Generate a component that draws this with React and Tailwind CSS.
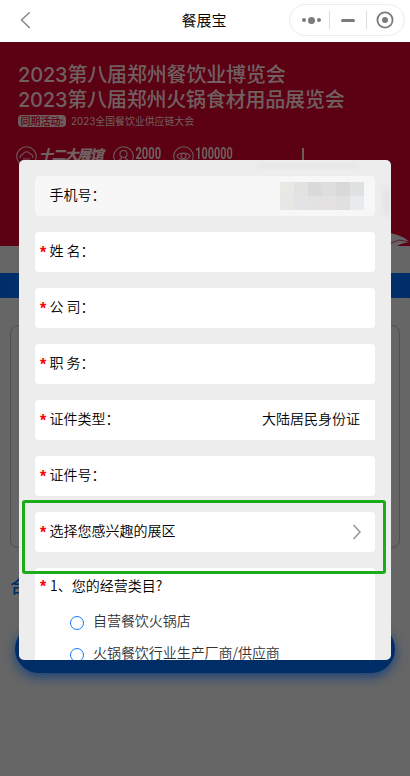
import React from "react";

const UI = "font-['Noto_Sans_CJK_SC',sans-serif]";

function Header() {
  return (
    <header className="relative flex h-[42px] shrink-0 items-center justify-between bg-white pl-5 pr-[5px]">
      <svg className="-mt-[2px]" width="11" height="18" viewBox="0 0 11 18" fill="none" stroke="#858585" strokeWidth="1.4">
        <path d="M9.8 1.2 1.5 9l8.3 8" />
      </svg>
      <h1 className="absolute left-0 right-[2px] top-[9px] text-center text-[15px] font-[350] leading-[22px] text-black">餐展宝</h1>
      <div className="relative mt-[-2px] flex h-8 w-[116px] items-center rounded-full border border-[#ececec]">
        <div className="flex flex-1 items-center justify-center gap-[2px] pl-[4px]">
          <i className="size-1 rounded-full bg-[#7b7b7b]" />
          <i className="size-[7px] rounded-full bg-[#7b7b7b]" />
          <i className="size-1 rounded-full bg-[#7b7b7b]" />
        </div>
        <div className="flex h-[18px] w-[38px] items-center justify-center border-x border-[#dedede]">
          <i className="h-[3px] w-[14px] rounded-full bg-[#7b7b7b]" />
        </div>
        <div className="flex w-[37px] items-center pl-[9px]">
          <svg width="18" height="18" viewBox="0 0 18 18">
            <circle cx="9" cy="9" r="7.6" fill="none" stroke="#7b7b7b" strokeWidth="1.8" />
            <circle cx="9" cy="9" r="3" fill="#7b7b7b" />
          </svg>
        </div>
      </div>
    </header>
  );
}

function Ring({ children }) {
  return (
    <svg className="shrink-0" width="21" height="21" viewBox="0 0 21 21" fill="none" stroke="#6c5b5b" strokeWidth="1.1">
      <circle cx="10.5" cy="10.5" r="9.8" />
      {children}
    </svg>
  );
}

function Banner() {
  return (
    <section className="relative h-[204px] shrink-0 overflow-hidden bg-[#5c0014] pl-[18px] pt-[21px] font-['Inter','Noto_Sans_CJK_SC',sans-serif] text-[#706060]">
      <p className="whitespace-nowrap text-[20px] font-medium leading-[25px] tracking-[-0.17px]">2023第八届郑州餐饮业博览会</p>
      <p className="whitespace-nowrap text-[20px] font-medium leading-[25px] tracking-[-0.2px]">2023第八届郑州火锅食材用品展览会</p>
      <div className="mt-[1px] flex h-[13px] items-center gap-[5px]">
        <span className="flex h-3 w-[48px] items-center justify-center whitespace-nowrap rounded-[4px] bg-[#6e5c5c] text-[10px] font-medium leading-3 text-[#5c0014]">同期活动:</span>
        <span className="whitespace-nowrap text-[9.9px] leading-3">2023全国餐饮业供应链大会</span>
      </div>
      <div className="-ml-[2px] mt-[19px] flex h-[23px] items-start">
        <Ring><path d="M4 12c0-3 2-3 3-4 2-3 5-3 7 0 2 0 3 2 3 4M7 13h7" /></Ring>
        <span className="ml-[2px] w-[74px] whitespace-nowrap text-[14px] font-black italic leading-[18px] tracking-[-1.3px]">十二大展馆</span>
        <Ring><circle cx="10.5" cy="8" r="3.5" /><path d="M8.5 10.5v2L5 15M12.500 10.500v2l3.500 2.500" /></Ring>
        <span className="w-[39px]"><b className="block origin-left scale-x-[.7] pl-[2px] font-['Roboto',sans-serif] text-[16px] leading-[15px]">2000</b></span>
        <Ring><path d="M4 10c2-4 11-4 13 0-2 5-11 5-13 0Z" /><circle cx="10.500" cy="10" r="2.500" /></Ring>
        <span className="w-[49px]"><b className="block origin-left scale-x-[.68] pl-[2px] font-['Roboto',sans-serif] text-[16px] leading-[15px]">100000</b></span>
        <i className="ml-[59px] mt-[2px] h-5 w-[2px] bg-[#6e5c5c]" />
      </div>
      <svg className="absolute bottom-0 right-0" width="25" height="14" viewBox="0 0 25 14">
        <path d="M0 0c12 2 20 5 24 10l-8 2-4 2H0Z" fill="#656363" />
        <path d="M6 11l8-3 10 2" stroke="#5c2027" fill="none" />
      </svg>
    </section>
  );
}

function Star() {
  return <span className="w-[10px] shrink-0 pt-[2px] font-['Liberation_Sans',sans-serif] text-[16px] font-bold leading-5 text-[#f00]">*</span>;
}

function Field({ label, required = true, muted = false, square = false, children }) {
  return (
    <div className={`flex h-10 shrink-0 items-center pl-[5px] pr-[15px] ${square ? "rounded-l-[4px]" : "rounded-[4px]"} ${muted ? "bg-[#f7f7f7]" : "bg-white"}`}>
      {required ? <Star /> : <span className="w-[10px]" />}
      <span className="-ml-[0.5px] whitespace-pre pb-[4px]">{label}</span>
      <div className="ml-auto flex items-center">{children}</div>
    </div>
  );
}

const mosaic = [
  "bg-[#e8e8e5]", "bg-[#e2e2e1]", "bg-[#dadada]", "bg-[#dedede]", "bg-[#d9d9d9]", "bg-[#e0e2e1]",
  "bg-[#e7e7e6]", "bg-[#e3e3e5]", "bg-[#e2e2e2]", "bg-[#e3e1e2]", "bg-[#e0e0e1]", "bg-[#e9eaee]",
];

function Option({ children }) {
  return (
    <div className="flex h-8 shrink-0 items-center text-[#333]">
      <i className="mt-[3px] size-[14px] shrink-0 rounded-full border border-[#1677ff]" />
      <span className="ml-[9px] whitespace-nowrap pb-[2px] leading-5 tracking-[-0.05px]">{children}</span>
    </div>
  );
}

function Dialog() {
  return (
    <div className="absolute left-[19px] top-[160px] flex h-[500px] w-[372px] flex-col gap-4 overflow-hidden rounded-[5px] bg-[#ededed] px-4 pt-4 text-[14px] font-[350] leading-5 text-black">
      <div className="absolute left-[239px] top-[5px] h-[2px] w-[100px] rounded-full bg-[#d9c5ca] opacity-50 blur-[2px]" />
      <div className="absolute right-[2px] top-[26px] h-[30px] w-[5px] rounded-full bg-[#d9c5ca] opacity-40 blur-[3px]" />
      <Field label="手机号：" required={false} muted>
        <div className="-mr-1 grid w-[84px] grid-cols-6">
          {mosaic.map((tone, i) => <i key={i} className={`h-[14px] ${tone}`} />)}
        </div>
      </Field>
      <Field label="姓 名：" />
      <Field label="公 司：" />
      <Field label="职 务：" />
      <Field label="证件类型：" square><span className="pb-[4px]">大陆居民身份证</span></Field>
      <Field label="证件号：" />
      <Field label="选择您感兴趣的展区">
        <svg className="-mr-[2px]" width="10" height="16" viewBox="0 0 10 16" fill="none" stroke="#999" strokeWidth="1.6">
          <path d="m1.500 1 6.500 7-6.500 7" />
        </svg>
      </Field>
      <div className="flex h-[130px] shrink-0 flex-col rounded-[4px] bg-white pl-[5px] pt-2">
        <div className="flex h-5 items-center">
          <Star />
          <span className="pb-[2px]">1、您的经营类目?</span>
        </div>
        <div className="flex flex-col pl-[30px] pt-[9px]">
          <Option>自营餐饮火锅店</Option>
          <Option>火锅餐饮行业生产厂商/供应商</Option>
        </div>
      </div>
    </div>
  );
}

export default function App() {
  return (
    <main className={`relative flex h-[776px] w-[410px] flex-col overflow-hidden bg-[#666] ${UI}`}>
      <Header />
      <Banner />
      <div className="mt-[27px] h-[25px] shrink-0 bg-linear-to-r from-[#002d69] via-[#214779] to-[#002d69]" />
      <div className="mx-[10px] mt-[27px] h-[223px] shrink-0 rounded-[8px] border border-[#505050]" />
      <h2 className="ml-[10px] mt-[24px] h-[28px] shrink-0 text-[18px] font-medium leading-[26px] text-[#002d69]">合</h2>
      <div className="mx-[15px] mt-[25px] h-[48px] shrink-0 rounded-full bg-[#002d66] shadow-[0_4px_12px_#18427c]" />
      <Dialog />
      <div className="absolute left-[22px] top-[500px] h-[74px] w-[364px] rounded-[3px] border-[3px] border-[#1aad19]" />
    </main>
  );
}
